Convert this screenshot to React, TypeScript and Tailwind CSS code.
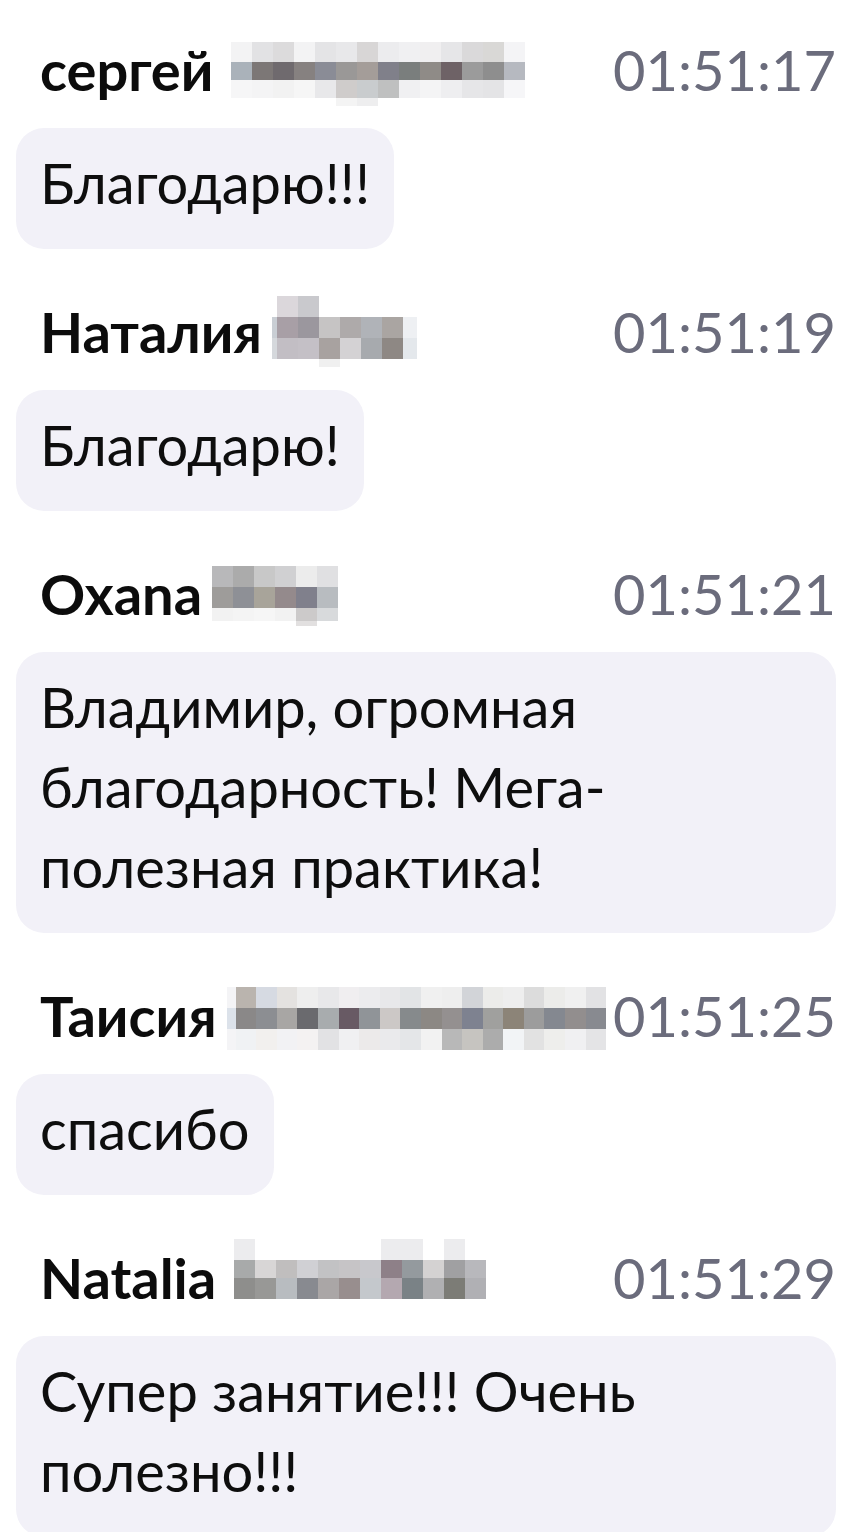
import React from "react";

type Mosaic = {
  cols: number[];
  rows: { h: number; c: string[] }[];
};

type Msg = {
  name: string;
  time: string;
  text: string;
  gapClass: string;
  shiftClass: string;
  mosaic: Mosaic;
};

const W = (n: number, w = 21) => Array.from({ length: n }, () => w);

const messages: Msg[] = [
  {
    name: "сергей",
    time: "01:51:17",
    text: "Благодарю!!!",
    gapClass: "ml-[18px]",
    shiftClass: "translate-y-[4px]",
    mosaic: {
      cols: W(14),
      rows: [
        {
          h: 20,
          c: ["#f3f3f4", "#e2e2e4", "#dcdbdc", "#f3f3f4", "#e4e4e6", "#e8e8ea", "#d8d6d6", "#ececee", "#f0f0f2", "#f0eff0", "#e6e6e8", "#dad9da", "#d9d8d6", "#f4f4f6"],
        },
        {
          h: 18,
          c: ["#aab2ba", "#7c7776", "#6f6a6e", "#868180", "#8a8c96", "#9a9897", "#a49d99", "#80808a", "#7a7e7d", "#8f8b87", "#6e6266", "#9b9b9b", "#8e8e8e", "#b6b9c0"],
        },
        {
          h: 18,
          c: ["#f6f6f7", "#f4f4f5", "#f2f2f2", "#f6f6f6", "#e8e8ea", "#cfcccb", "#c9ccce", "#bfc0c0", "#f0f0f2", "#f4f4f5", "#eeeef0", "#e6e6e8", "#e4e4e6", "#f6f6f8"],
        },
        {
          h: 8,
          c: ["", "", "", "", "", "#f4f4f4", "#eeeeef", "", "", "", "", "", "", ""],
        },
      ],
    },
  },
  {
    name: "Наталия",
    time: "01:51:19",
    text: "Благодарю!",
    gapClass: "ml-[10px]",
    shiftClass: "-translate-y-[1px]",
    mosaic: {
      cols: [5, 21, 21, 21, 21, 21, 21, 14],
      rows: [
        { h: 21, c: ["", "#dbd7db", "#c9c9cd", "", "", "", "", ""] },
        { h: 21, c: ["#c9ced4", "#a89fa6", "#9b979e", "#c6c4c4", "#aeaaaa", "#b0b3b8", "#aaa5a2", "#eef0f3"] },
        { h: 21, c: ["#d5d8dc", "#c2bec4", "#c4c0c6", "#a8a2a0", "#d4d2d4", "#a7aaae", "#8e8884", "#e4e8ec"] },
        { h: 8, c: ["", "", "", "#f0f0f0", "", "", "", ""] },
      ],
    },
  },
  {
    name: "Oxana",
    time: "01:51:21",
    text: "Владимир, огромная благодарность! Мега-полезная практика!",
    gapClass: "ml-[10px]",
    shiftClass: "translate-y-[2px]",
    mosaic: {
      cols: W(6),
      rows: [
        { h: 21, c: ["#b8b8ba", "#ababab", "#c8c8c8", "#d0d0d2", "#ececec", "#e0e0e2"] },
        { h: 21, c: ["#9e9c9a", "#8e9096", "#a8a49a", "#948a8c", "#80808c", "#b8bcc0"] },
        { h: 13, c: ["#f2f2f2", "#f4f4f4", "#f6f6f6", "#f2f2f2", "#cccaca", "#d8dadc"] },
        { h: 5, c: ["", "", "", "", "#e2e0e0", ""] },
      ],
    },
  },
  {
    name: "Таисия",
    time: "01:51:25",
    text: "спасибо",
    gapClass: "ml-[10px]",
    shiftClass: "translate-y-[2px]",
    mosaic: {
      cols: [9, ...W(18, 20.6)],
      rows: [
        {
          h: 21,
          c: ["#f4f4f6", "#bab4ae", "#d6dae2", "#e4e2e0", "#eeeeee", "#e8e8ea", "#f0eef0", "#ececee", "#e8e8ea", "#e2e4e6", "#f0f0f0", "#eeeeee", "#d2d4d8", "#ececea", "#eeeeee", "#dcdcdc", "#ececea", "#f0f0f0", "#e2e2e4"],
        },
        {
          h: 21,
          c: ["#dce2ea", "#8a8888", "#8c8e92", "#a8a6a4", "#6a6a6e", "#a8acae", "#685a64", "#909498", "#ccc8c6", "#868a8c", "#8c8884", "#949090", "#7e8290", "#a0a09e", "#8c8478", "#9c9c9c", "#848890", "#928e8e", "#888a90"],
        },
        {
          h: 21,
          c: ["#f4f4f6", "#f0f2f4", "#f2f0ee", "#f2f2f4", "#f4f2f2", "#e2e2e4", "#f0f0f2", "#eceaea", "#eaeaec", "#e4e6e8", "#f2f2f2", "#b8b8b8", "#c6c4c0", "#acacac", "#f2f4f6", "#e2e2e2", "#eeeeec", "#f0f0f2", "#e4e4e6"],
        },
      ],
    },
  },
  {
    name: "Natalia",
    time: "01:51:29",
    text: "Супер занятие!!! Очень полезно!!!",
    gapClass: "ml-[18px]",
    shiftClass: "-translate-y-[9px]",
    mosaic: {
      cols: W(12),
      rows: [
        { h: 21, c: ["#ececee", "", "", "", "", "", "", "#ececee", "#ececee", "", "#ececee", ""] },
        { h: 18, c: ["#a8aaaa", "#d8d6d6", "#c0bebe", "#d0d0d4", "#c2c2c4", "#c6c4c6", "#c8c8cc", "#8e8088", "#949a9e", "#d4d2d2", "#a0a0a2", "#b8b8bc"] },
        { h: 21, c: ["#8e8e8c", "#989896", "#b8bcc0", "#888a90", "#aaa6a6", "#988e8e", "#c4c8cc", "#b4a8b0", "#7a8286", "#b0b0b2", "#7c7c76", "#b0b0b4"] },
      ],
    },
  },
];

function MosaicBlock({ m }: { m: Mosaic }) {
  return (
    <div className="flex flex-col">
      {m.rows.map((r, ri) => (
        <div key={ri} className="flex">
          {m.cols.map((w, ci) => (
            <div
              key={ci}
              style={{ width: w, height: r.h, backgroundColor: r.c[ci] || "transparent" }}
            />
          ))}
        </div>
      ))}
    </div>
  );
}

export default function App() {
  return (
    <div className="min-h-screen bg-white pt-[30px] pl-4 pr-7 font-['Lato','Noto_Sans',sans-serif]">
      {messages.map((m) => (
        <div key={m.time} className="mb-[43px] flex flex-col items-start">
          <div className="flex h-20 w-full items-center pl-6">
            <span className="text-[56px] font-bold leading-[80px] text-[#0c0c0c]">{m.name}</span>
            <div className={`${m.gapClass} ${m.shiftClass}`}>
              <MosaicBlock m={m.mosaic} />
            </div>
            <span className="ml-auto text-[56px] leading-[80px] text-[#6b6c7c]">{m.time}</span>
          </div>
          <div className="mt-[18px] max-w-full rounded-[28px] bg-[#f2f1f8] px-6 pt-[15px] pb-[26px] text-[56px] leading-[80px] text-[#0e0e0e]">
            {m.text}
          </div>
        </div>
      ))}
    </div>
  );
}
